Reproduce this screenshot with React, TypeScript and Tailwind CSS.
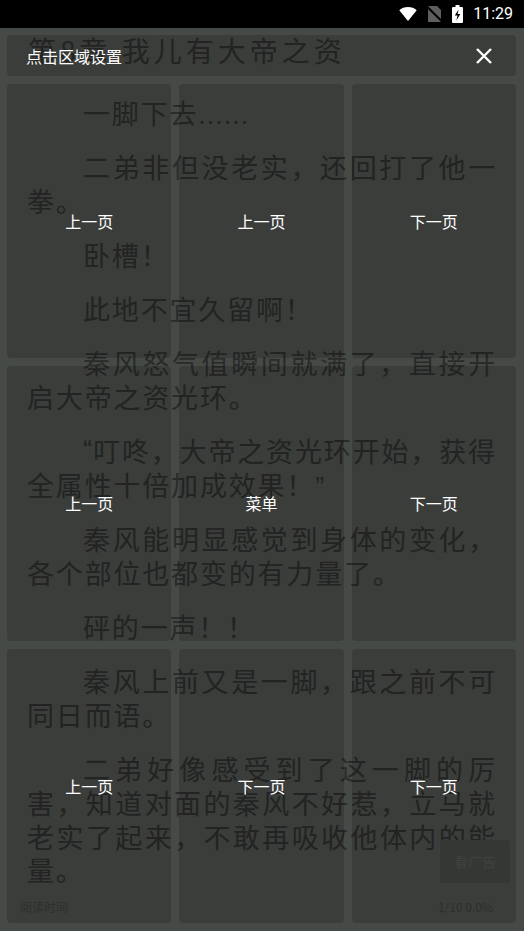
import React from "react";

const paras: string[][] = [
  ["一脚下去......"],
  ["二弟非但没老实，还回打了他一", "拳。"],
  ["卧槽！"],
  ["此地不宜久留啊！"],
  ["秦风怒气值瞬间就满了，直接开", "启大帝之资光环。"],
  ["“叮咚，大帝之资光环开始，获得", "全属性十倍加成效果！”"],
  ["秦风能明显感觉到身体的变化，", "各个部位也都变的有力量了。"],
  ["砰的一声！！"],
  ["秦风上前又是一脚，跟之前不可", "同日而语。"],
  [
    "二弟好像感受到了这一脚的厉",
    "害，知道对面的秦风不好惹，立马就",
    "老实了起来，不敢再吸收他体内的能",
    "量。",
  ],
];

const labels = ["上一页", "上一页", "下一页", "上一页", "菜单", "下一页", "上一页", "下一页", "下一页"];

const narrow = new Set(["“", "”", "."]);

function Chars({ text }: { text: string }) {
  return (
    <>
      {Array.from(text).map((ch, i) =>
        narrow.has(ch) ? (
          <span key={i} className="font-['Liberation_Sans',sans-serif] tracking-[1px]">
            {ch}
          </span>
        ) : (
          <span key={i}>{ch}</span>
        )
      )}
    </>
  );
}

function Line({ text, first, justify }: { text: string; first: boolean; justify: boolean }) {
  const pad = first ? "pl-[56px]" : "";
  if (justify) {
    return (
      <div className={`h-[33.7px] leading-[33.7px] flex justify-between ${pad}`}>
        <Chars text={text} />
      </div>
    );
  }
  return (
    <div className={`h-[33.7px] leading-[33.7px] whitespace-nowrap ${pad}`}>
      <Chars text={text} />
    </div>
  );
}

export default function App() {
  return (
    <div className="relative w-[524px] h-[931px] overflow-hidden bg-[#464a46] font-['Noto_Sans_CJK_SC',sans-serif]">
      {/* status bar */}
      <div className="h-[28px] bg-black flex items-center justify-end pr-[11px]">
        <svg width="18" height="14" viewBox="0 0 18 14">
          <path d="M9 14L0.3 3.2C2.7 1.2 5.7 0 9 0s6.3 1.2 8.7 3.2L9 14z" fill="#ffffff" />
        </svg>
        <svg width="15" height="16" viewBox="0 0 15 16" className="ml-[10px]">
          <path d="M1 0h9l4 4v12H1z" fill="#5e5e5e" />
          <line x1="0" y1="0.5" x2="15" y2="15.5" stroke="#000" strokeWidth="2" />
        </svg>
        <svg width="11" height="18" viewBox="0 0 11 18" className="ml-[10px]">
          <rect x="3.5" y="0" width="4" height="2" fill="#ffffff" />
          <rect x="0" y="2" width="11" height="16" rx="1" fill="#ffffff" />
          <path d="M6.6 4.5L2.8 10.6h2.7L4.4 15.5 8.3 9H5.6z" fill="#000000" />
        </svg>
        <span className="ml-[10px] text-white text-[16px] leading-none font-['Roboto',sans-serif]">11:29</span>
      </div>

      {/* reader page */}
      <div className="flex flex-col h-[903px] text-[#292b29]">
        <div className="h-[44px] flex items-center pl-[28px] text-[28px] tracking-[4px] leading-none whitespace-nowrap">
          第8章 我儿有大帝之资
        </div>
        <div className="mt-[24px] px-[27px] text-[27px] tracking-[1.8px]">
          {paras.map((p, i) => (
            <div key={i} className="mb-[20.5px] last:mb-0">
              {p.map((l, j) => (
                <Line key={j} text={l} first={j === 0} justify={j < p.length - 1} />
              ))}
            </div>
          ))}
        </div>
        <div className="mt-auto mb-[16px] flex justify-between pl-[20px] pr-[31px] text-[12px] leading-[16px] text-[#363936]">
          <span>阅读时间</span>
          <span>1/10 0.0%</span>
        </div>
      </div>

      {/* ad button on page */}
      <div className="absolute left-[440px] top-[840px] w-[70px] h-[43px] rounded-[3px] bg-[#404340] flex items-center justify-center text-[14px] text-[#4c4f4c]">
        看广告
      </div>

      {/* tap-area overlay */}
      <div className="absolute inset-x-0 top-[28px] bottom-0 flex flex-col pt-[7px] pl-[7px] pr-[8px] pb-[8px] gap-[8px]">
        <div className="h-[41px] shrink-0 rounded-[4px] bg-[rgba(0,0,0,0.17)] flex items-center justify-between pl-[19px] pr-[24px]">
          <span className="text-white text-[16px] leading-none">点击区域设置</span>
          <svg width="16" height="16" viewBox="0 0 16 16">
            <path d="M1 1L15 15M15 1L1 15" stroke="#ffffff" strokeWidth="2.4" />
          </svg>
        </div>
        <div className="flex-1 grid grid-cols-3 grid-rows-3 gap-[8px]">
          {labels.map((l, i) => (
            <div
              key={i}
              className="rounded-[4px] bg-[rgba(0,0,0,0.17)] flex items-center justify-center text-white text-[16px] leading-none"
            >
              {l}
            </div>
          ))}
        </div>
      </div>
    </div>
  );
}
